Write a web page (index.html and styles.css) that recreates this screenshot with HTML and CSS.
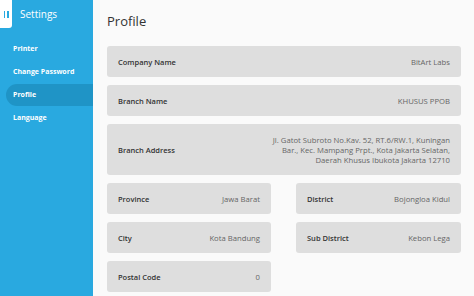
FILE: index.html
```html
<!DOCTYPE html>
<html lang="en">
<head>
  <meta charset="UTF-8" />
  <meta name="viewport" content="width=device-width, initial-scale=1.0" />
  <title>Settings - Profile</title>
  <link rel="stylesheet" href="styles.css">
</head>
<body>
  <aside class="sidebar">
    <div class="side-head">
      <div class="tab"><span></span><span></span></div>
      <span class="side-title">Settings</span>
    </div>
    <nav class="menu">
      <a class="menu-item">Printer</a>
      <a class="menu-item">Change Password</a>
      <a class="menu-item active">Profile</a>
      <a class="menu-item">Language</a>
    </nav>
  </aside>

  <main class="content">
    <h1>Profile</h1>

    <div class="field">
      <span class="label">Company Name</span>
      <span class="value">BitArt Labs</span>
    </div>
    <div class="field">
      <span class="label">Branch Name</span>
      <span class="value">KHUSUS PPOB</span>
    </div>
    <div class="field tall">
      <span class="label">Branch Address</span>
      <span class="value">Jl. Gatot Subroto No.Kav. 52, RT.6/RW.1, Kuningan<br>Bar., Kec. Mampang Prpt., Kota Jakarta Selatan,<br>Daerah Khusus Ibukota Jakarta 12710</span>
    </div>

    <div class="grid">
      <div class="field">
        <span class="label">Province</span>
        <span class="value">Jawa Barat</span>
      </div>
      <div class="field">
        <span class="label">District</span>
        <span class="value">Bojongloa Kidul</span>
      </div>
      <div class="field">
        <span class="label">City</span>
        <span class="value">Kota Bandung</span>
      </div>
      <div class="field">
        <span class="label">Sub District</span>
        <span class="value">Kebon Lega</span>
      </div>
      <div class="field">
        <span class="label">Postal Code</span>
        <span class="value">0</span>
      </div>
    </div>
  </main>
</body>
</html>
```

FILE: styles.css
```css
body {
  font-family: "Open Sans", "Noto Sans", sans-serif;
  margin: 0;
  padding: 0;
  display: flex;
  height: 296px;
  overflow: hidden;
  background: #fafafa;
}
.sidebar {
  width: 93px;
  flex-shrink: 0;
  background: #29a9e0;
  color: #fff;
}
.side-head {
  display: flex;
  align-items: flex-start;
  height: 30px;
}
.tab {
  width: 12px;
  height: 28px;
  background: #fff;
  border-bottom-right-radius: 3px;
  display: flex;
  align-items: center;
  justify-content: center;
  gap: 2px;
}
.tab span {
  width: 1.5px;
  height: 7px;
  background: #29a9e0;
}
.side-title {
  margin-left: 8px;
  font-size: 10px;
  line-height: 28px;
}
.menu {
  display: flex;
  flex-direction: column;
  padding-top: 8px;
}
.menu-item {
  font-size: 7px;
  font-weight: bold;
  line-height: 22px;
  padding-left: 13px;
  margin-bottom: 1px;
}
.menu-item.active {
  background: #1f94c6;
  margin-left: 6px;
  padding-left: 7px;
  border-radius: 11px 0 0 11px;
}
.content {
  flex: 1;
  padding: 0 13px 0 14px;
}
h1 {
  font-size: 13px;
  font-weight: normal;
  color: #333;
  margin: 12px 0 16px;
}
.field {
  background: #dedede;
  border-radius: 3px;
  display: flex;
  align-items: center;
  justify-content: space-between;
  height: 31px;
  padding: 0 11px;
  margin-bottom: 8px;
  font-size: 7.5px;
}
.field.tall {
  height: 51px;
}
.label {
  color: #333;
  font-weight: 600;
}
.value {
  color: #666;
  font-size: 7.7px;
  text-align: right;
  line-height: 10px;
}
.grid {
  display: grid;
  grid-template-columns: 164px 165px;
  column-gap: 25px;
}
```
